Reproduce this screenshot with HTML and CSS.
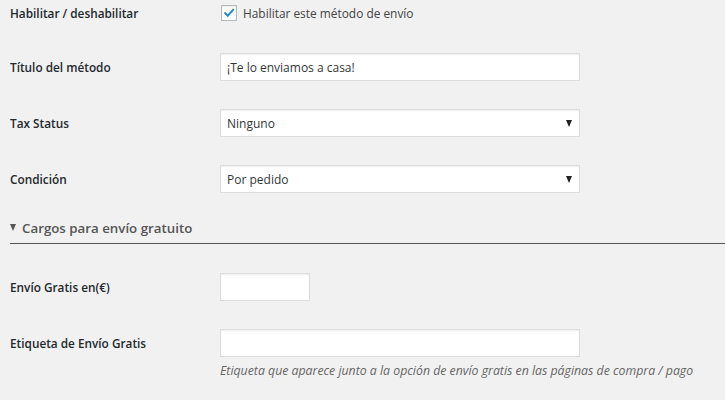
FILE: index.html
```html
<!DOCTYPE html>
<html lang="es">
<head>
<meta charset="utf-8">
<title>Envío gratuito</title>
<link rel="stylesheet" href="styles.css">
</head>
<body>
<div class="form">
  <div class="row row-first">
    <div class="label">Habilitar / deshabilitar</div>
    <div class="field">
      <label class="check">
        <span class="box"><svg viewBox="0 0 16 16" width="16" height="16"><path d="M3.6 8.2 L6.6 11.2 L12.6 4.4" fill="none" stroke="#1e8cbe" stroke-width="2.2" stroke-linecap="square"/></svg></span>
        <span class="check-text">Habilitar este método de envío</span>
      </label>
    </div>
  </div>
  <div class="row">
    <div class="label">Título del método</div>
    <div class="field"><div class="input wide">¡Te lo enviamos a casa!</div></div>
  </div>
  <div class="row">
    <div class="label">Tax Status</div>
    <div class="field"><div class="input wide select"><span>Ninguno</span><span class="arrow"></span></div></div>
  </div>
  <div class="row">
    <div class="label">Condición</div>
    <div class="field"><div class="input wide select"><span>Por pedido</span><span class="arrow"></span></div></div>
  </div>
  <div class="section">
    <span class="tri"></span><span class="section-title">Cargos para envío gratuito</span>
  </div>
  <div class="row row-after-section">
    <div class="label">Envío Gratis en(€)</div>
    <div class="field"><div class="input small"></div></div>
  </div>
  <div class="row">
    <div class="label">Etiqueta de Envío Gratis</div>
    <div class="field"><div class="input wide"></div></div>
  </div>
  <div class="desc-row">
    <p class="desc">Etiqueta que aparece junto a la opción de envío gratis en las páginas de compra / pago</p>
  </div>
</div>
</body>
</html>
```
FILE: styles.css
```css
html, body {
  margin: 0;
  padding: 0;
  background: #f1f1f1;
}
body {
  font-family: "Open Sans", "Noto Sans", "Liberation Sans", sans-serif;
  font-size: 13px;
  color: #23282d;
  width: 725px;
  height: 400px;
  overflow: hidden;
}
.form {
  padding-left: 10px;
}
.row {
  display: flex;
  align-items: center;
  height: 28px;
  margin-top: 28px;
}
.row-first {
  height: 26px;
  margin-top: 0;
}
.row-first + .row {
  margin-top: 27px;
}
.label {
  width: 210px;
  flex: none;
  font-weight: 600;
  font-size: 11.8px;
  color: #23282d;
}
.field {
  flex: 1;
  display: flex;
  align-items: center;
}
.check {
  display: flex;
  align-items: center;
  gap: 6px;
}
.box {
  width: 14px;
  height: 14px;
  border: 1px solid #b4b9be;
  background: #fff;
  box-shadow: inset 0 1px 2px rgba(0,0,0,.1);
  display: flex;
  align-items: center;
  justify-content: center;
  margin-left: 1px;
}
.box svg {
  width: 14px;
  height: 14px;
}
.check-text {
  color: #444;
  font-size: 11.9px;
}
.input {
  box-sizing: border-box;
  height: 28px;
  background: #fff;
  border: 1px solid #ddd;
  box-shadow: inset 0 1px 2px rgba(0,0,0,.07);
  display: flex;
  align-items: center;
  padding: 0 6px;
  color: #32373c;
  font-size: 12px;
}
.wide {
  width: 360px;
}
.small {
  width: 90px;
}
.select {
  justify-content: space-between;
  padding-right: 7px;
}
.arrow {
  width: 0;
  height: 0;
  border-left: 3.5px solid transparent;
  border-right: 3.5px solid transparent;
  border-top: 7px solid #222;
}
.section {
  margin-top: 26px;
  display: flex;
  align-items: center;
  height: 18px;
  padding-bottom: 6px;
  border-bottom: 1px solid #555;
}
.tri {
  width: 0;
  height: 0;
  border-left: 3.5px solid transparent;
  border-right: 3.5px solid transparent;
  border-top: 7px solid #555;
  margin-right: 6px;
  margin-top: -2px;
}
.section-title {
  font-weight: 600;
  color: #555;
  font-size: 13.3px;
}
.row-after-section {
  margin-top: 29px;
}
.desc-row {
  padding-left: 210px;
}
.desc {
  margin: 6px 0 0;
  font-style: italic;
  color: #666;
  font-size: 12.3px;
  line-height: 16px;
}
```
